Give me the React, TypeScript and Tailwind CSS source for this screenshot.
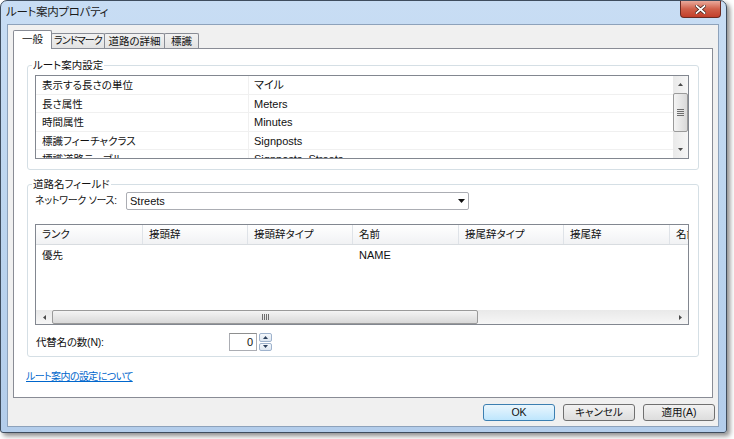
import React from "react";

const props: [string, string][] = [
  ["表示する長さの単位", "マイル"],
  ["長さ属性", "Meters"],
  ["時間属性", "Minutes"],
  ["標識フィーチャクラス", "Signposts"],
  ["標識道路テーブル", "Signposts_Streets"],
];

const cols = [
  { label: "ランク", w: "w-[107px]" },
  { label: "接頭辞", w: "w-[105px]" },
  { label: "接頭辞タイプ", w: "w-[105px]" },
  { label: "名前", w: "w-[106px]" },
  { label: "接尾辞タイプ", w: "w-[105px]" },
  { label: "接尾辞", w: "w-[106px]" },
  { label: "名前", w: "w-[106px]" },
];

const Arrow = ({ dir }: { dir: "up" | "down" | "left" | "right" }) => {
  if (dir === "up")
    return (
      <svg width="5" height="3" viewBox="0 0 5 3">
        <polygon points="0,3 2.5,0 5,3" fill="#4a4a4a" />
      </svg>
    );
  if (dir === "down")
    return (
      <svg width="5" height="3" viewBox="0 0 5 3">
        <polygon points="0,0 5,0 2.5,3" fill="#4a4a4a" />
      </svg>
    );
  if (dir === "left")
    return (
      <svg width="3" height="5" viewBox="0 0 3 5">
        <polygon points="3,0 3,5 0,2.5" fill="#4a4a4a" />
      </svg>
    );
  return (
    <svg width="3" height="5" viewBox="0 0 3 5">
      <polygon points="0,0 0,5 3,2.5" fill="#4a4a4a" />
    </svg>
  );
};

const VScroll = () => (
  <div className="w-[15px] shrink-0 bg-gradient-to-r from-[#e9e9e9] to-[#f6f6f6] flex flex-col">
    <div className="h-[17px] flex items-center justify-center">
      <Arrow dir="up" />
    </div>
    <div className="h-[39px] rounded-[2px] border border-[#9a9a9a] bg-gradient-to-r from-[#f4f4f4] to-[#d9d9d9] flex flex-col items-center justify-center gap-[1px]">
      <div className="w-[7px] h-px bg-[#6d6d6d]" />
      <div className="w-[7px] h-px bg-[#6d6d6d]" />
      <div className="w-[7px] h-px bg-[#6d6d6d]" />
      <div className="w-[7px] h-px bg-[#6d6d6d]" />
    </div>
    <div className="flex-1" />
    <div className="h-[17px] flex items-center justify-center">
      <Arrow dir="down" />
    </div>
  </div>
);

const HScroll = () => (
  <div className="h-[14px] shrink-0 flex bg-gradient-to-b from-[#e9e9e9] to-[#f6f6f6]">
    <div className="w-[16px] flex items-center justify-center">
      <Arrow dir="left" />
    </div>
    <div className="w-[426px] rounded-[2px] border border-[#9a9a9a] bg-gradient-to-b from-[#f4f4f4] to-[#d9d9d9] flex items-center justify-center gap-[1px]">
      <div className="w-px h-[6px] bg-[#6d6d6d]" />
      <div className="w-px h-[6px] bg-[#6d6d6d]" />
      <div className="w-px h-[6px] bg-[#6d6d6d]" />
      <div className="w-px h-[6px] bg-[#6d6d6d]" />
    </div>
    <div className="flex-1" />
    <div className="w-[16px] flex items-center justify-center">
      <Arrow dir="right" />
    </div>
  </div>
);

const GroupBox = ({
  title,
  className,
  children,
}: {
  title: string;
  className: string;
  children: React.ReactNode;
}) => (
  <div className={`relative mx-[13px] border border-[#d5dfe5] rounded-[3px] ${className}`}>
    <span className="absolute left-[4px] -top-[8px] bg-white px-[1px] text-[10.5px] leading-[14px]">
      {title}
    </span>
    {children}
  </div>
);

const Button = ({ label, primary }: { label: string; primary?: boolean }) => (
  <div
    className={`w-[72px] h-[17px] rounded-[3px] border flex items-center justify-center text-[10.5px] leading-none ${
      primary
        ? "border-[#3c7fb1] bg-gradient-to-b from-[#eaf6fd] to-[#bee6fd]"
        : "border-[#707070] bg-gradient-to-b from-[#f2f2f2] to-[#dddddd]"
    }`}
  >
    {label}
  </div>
);

const tabCls =
  "h-[15px] -ml-px border border-b-0 border-[#898c95] rounded-t-[2px] bg-gradient-to-b from-[#f2f2f2] to-[#e3e3e3] flex items-center justify-center leading-none whitespace-nowrap";

export default function App() {
  return (
    <div className="w-[734px] h-[439px] bg-white font-['Liberation_Sans','Noto_Sans_CJK_JP',sans-serif] [font-feature-settings:'palt'] text-[#111] overflow-hidden">
      <div className="w-[727px] h-[433px] border border-[#3f4d5e] rounded-t-[7px] rounded-b-[3px] bg-gradient-to-b from-[#c8ddf4] via-[#bcd5ef] to-[#b3cdeb] shadow-[3px_3px_5px_rgba(0,0,0,0.45)] flex flex-col">
        {/* title bar */}
        <div className="h-[23px] shrink-0 flex items-start">
          <div className="pl-[5px] pt-[4px] text-[11.5px] leading-[14px] tracking-[-0.3px] text-[#1a1a1a]">
            ルート案内プロパティ
          </div>
          <div className="ml-auto mr-[5px] w-[41px] h-[17px] rounded-b-[4px] border border-[#6b2a22] border-t-0 bg-gradient-to-b from-[#e9a99b] via-[#d0604a] to-[#c23e2a] flex items-center justify-center">
            <svg width="11" height="9" viewBox="0 0 11 9">
              <path d="M1.5 1 L9.5 8 M9.5 1 L1.5 8" stroke="#3a1a14" strokeWidth="3.2" strokeLinecap="square" />
              <path d="M1.5 1 L9.5 8 M9.5 1 L1.5 8" stroke="#ffffff" strokeWidth="1.8" strokeLinecap="square" />
            </svg>
          </div>
        </div>

        {/* client area */}
        <div className="ml-[6px] w-[712px] h-[403px] border border-[#8da2bb] bg-[#f0f0f0] flex flex-col">
          {/* tabs */}
          <div className="pl-[5px] pt-[4px] h-[23px] shrink-0 flex items-end text-[10.5px]">
            <div className="relative z-10 w-[39px] h-[19px] -mb-px border border-b-0 border-[#898c95] rounded-t-[2px] bg-white flex items-center justify-center leading-none pb-[2px]">
              一般
            </div>
            <div className={`w-[54px] text-[10px] tracking-[-0.9px] ${tabCls}`}>ランドマーク</div>
            <div className={`w-[61px] ${tabCls}`}>道路の詳細</div>
            <div className={`w-[35px] ${tabCls}`}>標識</div>
          </div>

          {/* tab panel */}
          <div className="ml-[5px] w-[700px] h-[350px] shrink-0 border border-[#898c95] bg-white flex flex-col">
            <GroupBox title="ルート案内設定" className="mt-[16px] h-[105px] shrink-0">
              <div className="ml-[7px] mt-[9px] w-[654px] h-[84px] border border-[#828790] bg-white flex overflow-hidden">
                <div className="flex-1 flex flex-col">
                  {props.map(([k, v]) => (
                    <div key={k} className="h-[18.5px] shrink-0 flex border-b border-[#f0f0f0]">
                      <div className="w-[213px] pl-[6px] border-r border-[#f0f0f0] text-[10.5px] leading-[18px] whitespace-nowrap">
                        {k}
                      </div>
                      <div className="pl-[5px] text-[11px] leading-[18px] whitespace-nowrap">{v}</div>
                    </div>
                  ))}
                </div>
                <VScroll />
              </div>
            </GroupBox>

            <GroupBox title="道路名フィールド" className="mt-[14px] h-[173px] shrink-0">
              <div className="mt-[7px] ml-[7px] flex items-center">
                <div className="w-[91px] text-[10px] tracking-[-0.3px] leading-none whitespace-nowrap">
                  ネットワーク ソース:
                </div>
                <div className="w-[343px] h-[18px] border border-[#abadb3] rounded-[2px] bg-white flex items-center pl-[3px] pr-[3px]">
                  <span className="text-[11px] leading-none">Streets</span>
                  <svg className="ml-auto" width="7" height="4" viewBox="0 0 7 4">
                    <polygon points="0,0 7,0 3.5,4" fill="#111" />
                  </svg>
                </div>
              </div>

              <div className="ml-[7px] mt-[14px] w-[654px] h-[101px] border border-[#828790] bg-white flex flex-col overflow-hidden">
                <div className="h-[20px] shrink-0 flex border-b border-[#d8dce0] bg-gradient-to-b from-white to-[#f1f2f4] overflow-hidden">
                  {cols.map((c, i) => (
                    <div
                      key={i}
                      className={`${c.w} shrink-0 pl-[6px] border-r border-[#dfe3e8] text-[10.5px] leading-[19px] whitespace-nowrap`}
                    >
                      {c.label}
                    </div>
                  ))}
                </div>
                <div className="h-[20px] shrink-0 flex">
                  <div className="w-[107px] shrink-0 pl-[6px] text-[10.5px] leading-[20px]">優先</div>
                  <div className="w-[210px] shrink-0" />
                  <div className="pl-[6px] text-[11px] leading-[20px]">NAME</div>
                </div>
                <div className="flex-1" />
                <HScroll />
              </div>

              <div className="ml-[8px] mt-[8px] flex items-center">
                <div className="w-[193px] text-[10.5px] tracking-[-0.2px] leading-none">代替名の数(N):</div>
                <div className="w-[28px] h-[18px] border border-[#abadb3] border-t-[#8e8f8f] bg-white flex items-center justify-end pr-[3px] text-[11px] leading-none">
                  0
                </div>
                <div className="ml-[2px] w-[13px] h-[18px] flex flex-col gap-px">
                  <div className="flex-1 rounded-[2px] border border-[#9fb3cd] bg-gradient-to-b from-[#f4f8fc] to-[#dde6f0] flex items-center justify-center">
                    <svg width="5" height="3" viewBox="0 0 5 3">
                      <polygon points="0,3 2.5,0 5,3" fill="#2b3f5c" />
                    </svg>
                  </div>
                  <div className="flex-1 rounded-[2px] border border-[#9fb3cd] bg-gradient-to-b from-[#f4f8fc] to-[#dde6f0] flex items-center justify-center">
                    <svg width="5" height="3" viewBox="0 0 5 3">
                      <polygon points="0,0 5,0 2.5,3" fill="#2b3f5c" />
                    </svg>
                  </div>
                </div>
              </div>
            </GroupBox>

            <div className="ml-[12px] mt-[14px] text-[10px] tracking-[-0.6px] leading-[12px] text-[#0066cc] underline whitespace-nowrap">
              ルート案内の設定について
            </div>
          </div>

          {/* buttons */}
          <div className="mt-[6px] mr-[3px] flex justify-end gap-[8px]">
            <Button label="OK" primary />
            <Button label="キャンセル" />
            <Button label="適用(A)" />
          </div>
        </div>
      </div>
    </div>
  );
}
